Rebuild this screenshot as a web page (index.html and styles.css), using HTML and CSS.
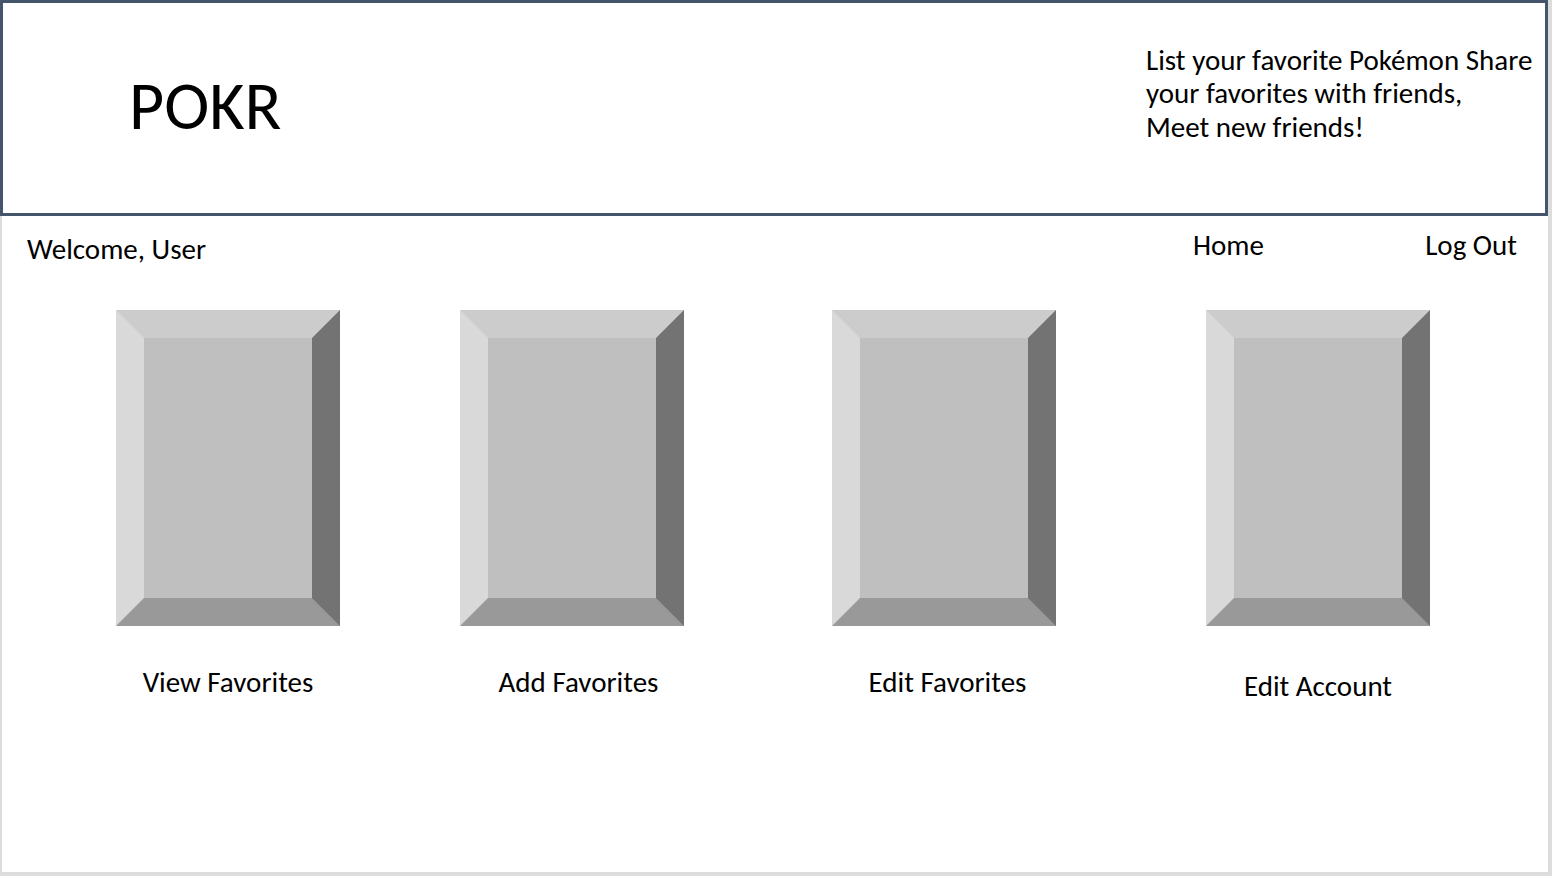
FILE: index.html
```html
<!DOCTYPE html>
<html lang="en">
<head>
<meta charset="utf-8">
<title>POKR</title>
<link rel="stylesheet" href="styles.css">
</head>
<body>
<div class="frame">
  <header class="banner">
    <h1 class="logo">POKR</h1>
    <p class="tagline">List your favorite Pokémon Share<br>your favorites with friends,<br>Meet new friends!</p>
  </header>
  <main class="content">
    <nav class="topbar">
      <span class="welcome">Welcome, User</span>
      <div class="links">
        <a class="link link-home" href="#">Home</a>
        <a class="link link-logout" href="#">Log Out</a>
      </div>
    </nav>
    <section class="tiles">
      <div class="tile tile-1">
        <div class="bevel"></div>
        <span class="label">View Favorites</span>
      </div>
      <div class="tile tile-2">
        <div class="bevel"></div>
        <span class="label">Add Favorites</span>
      </div>
      <div class="tile tile-3">
        <div class="bevel"></div>
        <span class="label">Edit Favorites</span>
      </div>
      <div class="tile tile-4">
        <div class="bevel"></div>
        <span class="label label-low">Edit Account</span>
      </div>
    </section>
  </main>
</div>
</body>
</html>
```

FILE: styles.css
```css
* { box-sizing: border-box; }

html, body {
  margin: 0;
  padding: 0;
}

body {
  background: #dcdcdc;
  font-family: Carlito, Calibri, Lato, "Liberation Sans", sans-serif;
  color: #000;
  width: 1552px;
  height: 876px;
  overflow: hidden;
}

.frame {
  width: 1548px;
  height: 872px;
  background: #fff;
  display: flex;
  flex-direction: column;
}

.banner {
  height: 216px;
  flex: none;
  border: 3px solid #44546a;
  display: flex;
  justify-content: space-between;
  align-items: flex-start;
}

.logo {
  margin: 62px 0 0 126px;
  font-size: 68px;
  font-weight: 300;
  line-height: 1.2;
}

.tagline {
  margin: 41px 0 0 0;
  width: 399px;
  font-size: 29px;
  line-height: 33.4px;
}

.content {
  flex: 1;
  border-left: 2px solid #dcdcdc;
}

.topbar {
  height: 50px;
  display: flex;
  justify-content: space-between;
  align-items: flex-start;
  padding: 12px 0 0 25px;
  font-size: 29px;
  line-height: 1.2;
}

.welcome {
  margin-top: 4px;
}

.links {
  display: flex;
  width: 355px;
}

.link {
  color: #000;
  text-decoration: none;
}

.link-logout {
  margin-left: auto;
  margin-right: 31px;
}

.tiles {
  display: flex;
  align-items: flex-start;
  padding: 44px 0 0 114px;
}

.tile {
  width: 224px;
  display: flex;
  flex-direction: column;
  align-items: center;
}

.tile-2 { margin-left: 120px; }
.tile-3 { margin-left: 148px; }
.tile-4 { margin-left: 150px; }

.bevel {
  width: 224px;
  height: 316px;
  border-style: solid;
  border-width: 28px;
  border-color: #cccccc #737373 #999999 #d9d9d9;
  background: #bfbfbf;
}

.label {
  margin-top: 39px;
  font-size: 29px;
  line-height: 1.2;
  white-space: nowrap;
}

.tile-2 .label { padding-left: 13px; }
.tile-3 .label { padding-left: 7px; }

.label-low {
  margin-top: 43px;
}
```
